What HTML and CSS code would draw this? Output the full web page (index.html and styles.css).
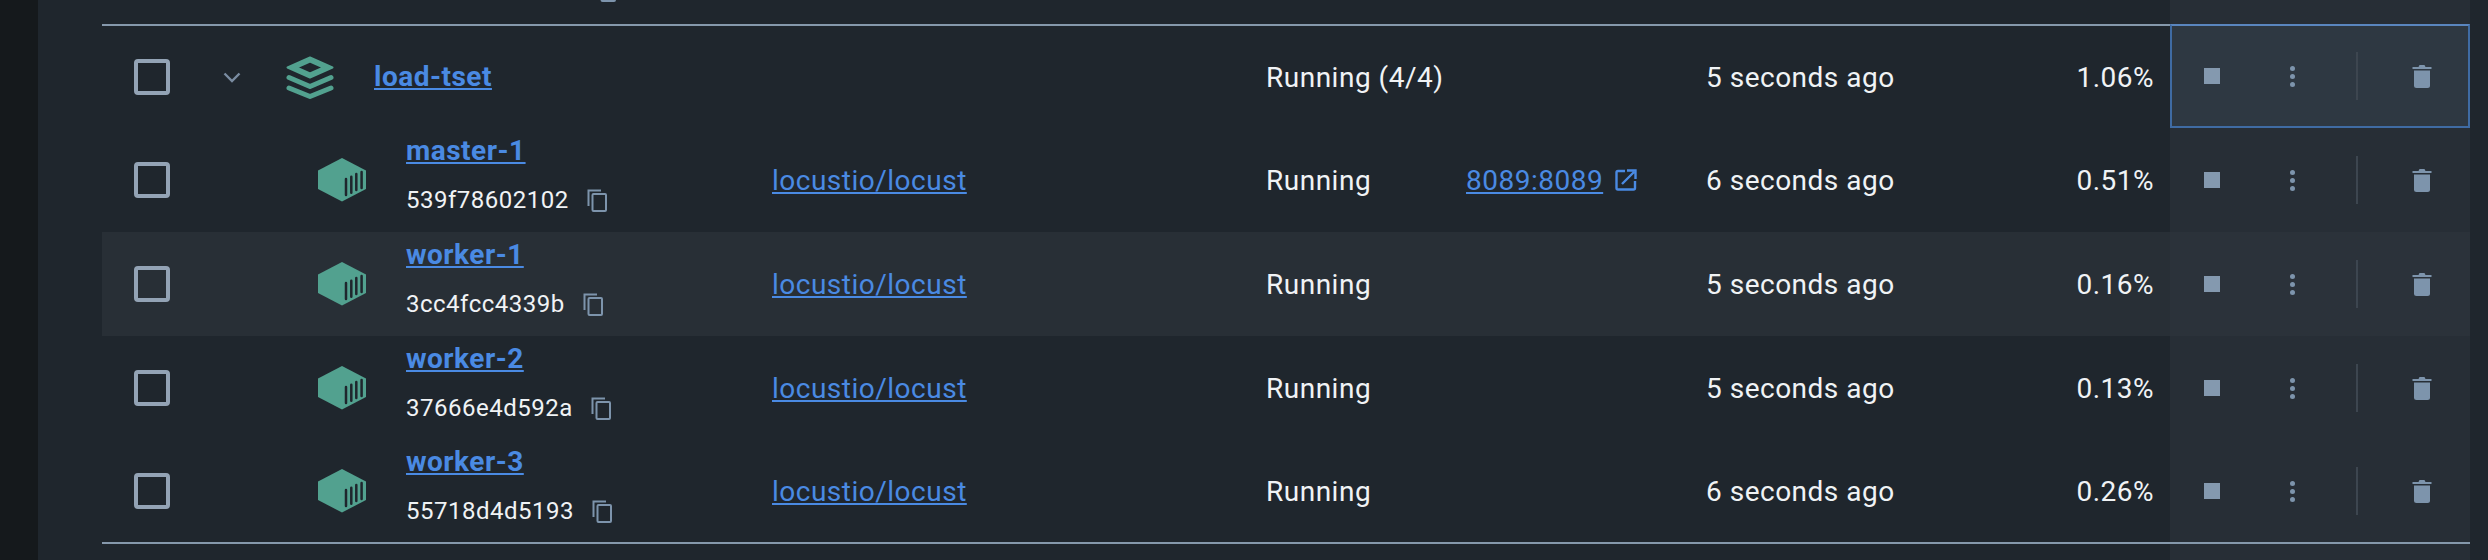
FILE: index.html
```html
<!DOCTYPE html>
<html lang="en">
<head>
    <meta charset="UTF-8">
    <title>Containers</title>
    <link rel="stylesheet" href="styles.css">
</head>
<body>
    <svg class="defs" width="0" height="0">
        <symbol id="i-stack" viewBox="0 0 48 43">
            <path d="M24 1.500 46.500 11.500 24 21.500 1.500 11.500Z M24 5.500 10.500 11.500 24 17.500 37.500 11.500Z" fill="#52a18f" fill-rule="evenodd" stroke="#52a18f" stroke-linejoin="round" stroke-width="2"/>
            <path d="M3 21.500 24 30.500 45 21.500M3 32 24 40.500 45 32" fill="none" stroke="#52a18f" stroke-linecap="round" stroke-linejoin="round" stroke-width="5"/>
        </symbol>
        <symbol id="i-box" viewBox="0 0 48 44">
            <path d="M24 0 48 12.500V31L24 43.500 0 31V12.500Z" fill="#52a18f"/>
            <path d="M28 21V37M33.300 18.700V34.700M38.300 16V32M43.600 14V30" fill="none" stroke="#1f262d" stroke-linecap="round" stroke-width="2.500"/>
        </symbol>
        <symbol id="i-copy" viewBox="0 0 20 23">
            <path d="M1.500 17V1.500H14" fill="none" stroke="#7d94ac" stroke-width="2"/>
            <rect x="5.500" y="5" width="13.500" height="17" rx="1" fill="none" stroke="#7d94ac" stroke-width="2"/>
        </symbol>
        <symbol id="i-open" viewBox="0 0 22 22">
            <path d="M10 2H3Q1.500 2 1.500 3.500V19Q1.500 20.500 3 20.500H18.500Q20 20.500 20 19V12" fill="none" stroke="#4a8ae3" stroke-width="2.400"/>
            <path d="M7 15 19 3M12 1.500H20.500V10" fill="none" stroke="#4a8ae3" stroke-width="2.400"/>
        </symbol>
        <symbol id="i-trash" viewBox="0 0 20 24">
            <path d="M0.500 3H6.500L7.500 1H12.500L13.500 3H19.500V5H0.500Z" fill="#7d94ac"/>
            <path d="M2 6.500H18V21.500Q18 24 15.500 24H4.500Q2 24 2 21.500Z" fill="#7d94ac"/>
        </symbol>
    </svg>

    <div class="sidebar"></div>
    <div class="main">
        <div class="table">
            <div class="strip strip-top">
                <div class="peek">
                    <span class="hash">8f2ab01c77de</span>
                    <svg class="copy"><use href="#i-copy"/></svg>
                </div>
                <div class="action-fill"></div>
            </div>

            <div class="row row-group">
                <div class="cell-check"><span class="checkbox"></span></div>
                <div class="cell-name">
                    <svg class="chevron" viewBox="0 0 18 11"><path d="M1.500 1.500 9 9 16.500 1.500" fill="none" stroke="#7a8ca1" stroke-width="2.400"/></svg>
                    <svg class="icon-stack"><use href="#i-stack"/></svg>
                    <a class="name" href="#">load-tset</a>
                </div>
                <div class="cell-image"></div>
                <div class="cell-status">Running (4/4)</div>
                <div class="cell-port"></div>
                <div class="cell-time">5 seconds ago</div>
                <div class="cell-cpu">1.06%</div>
                <div class="cell-actions selected">
                    <span class="stop"></span>
                    <span class="dots"><i></i><i></i><i></i></span>
                    <span class="divider"></span>
                    <svg class="trash"><use href="#i-trash"/></svg>
                </div>
            </div>

            <div class="row">
                <div class="cell-check"><span class="checkbox"></span></div>
                <div class="cell-name child">
                    <svg class="icon-box"><use href="#i-box"/></svg>
                    <div class="name-stack">
                        <a class="name" href="#">master-1</a>
                        <div class="hash-line"><span class="hash">539f78602102</span><svg class="copy"><use href="#i-copy"/></svg></div>
                    </div>
                </div>
                <div class="cell-image"><a href="#">locustio/locust</a></div>
                <div class="cell-status">Running</div>
                <div class="cell-port"><a href="#">8089:8089</a><svg class="open"><use href="#i-open"/></svg></div>
                <div class="cell-time">6 seconds ago</div>
                <div class="cell-cpu">0.51%</div>
                <div class="cell-actions">
                    <span class="stop"></span>
                    <span class="dots"><i></i><i></i><i></i></span>
                    <span class="divider"></span>
                    <svg class="trash"><use href="#i-trash"/></svg>
                </div>
            </div>

            <div class="row row-hover">
                <div class="cell-check"><span class="checkbox"></span></div>
                <div class="cell-name child">
                    <svg class="icon-box"><use href="#i-box"/></svg>
                    <div class="name-stack">
                        <a class="name" href="#">worker-1</a>
                        <div class="hash-line"><span class="hash">3cc4fcc4339b</span><svg class="copy"><use href="#i-copy"/></svg></div>
                    </div>
                </div>
                <div class="cell-image"><a href="#">locustio/locust</a></div>
                <div class="cell-status">Running</div>
                <div class="cell-port"></div>
                <div class="cell-time">5 seconds ago</div>
                <div class="cell-cpu">0.16%</div>
                <div class="cell-actions">
                    <span class="stop"></span>
                    <span class="dots"><i></i><i></i><i></i></span>
                    <span class="divider"></span>
                    <svg class="trash"><use href="#i-trash"/></svg>
                </div>
            </div>

            <div class="row">
                <div class="cell-check"><span class="checkbox"></span></div>
                <div class="cell-name child">
                    <svg class="icon-box"><use href="#i-box"/></svg>
                    <div class="name-stack">
                        <a class="name" href="#">worker-2</a>
                        <div class="hash-line"><span class="hash">37666e4d592a</span><svg class="copy"><use href="#i-copy"/></svg></div>
                    </div>
                </div>
                <div class="cell-image"><a href="#">locustio/locust</a></div>
                <div class="cell-status">Running</div>
                <div class="cell-port"></div>
                <div class="cell-time">5 seconds ago</div>
                <div class="cell-cpu">0.13%</div>
                <div class="cell-actions">
                    <span class="stop"></span>
                    <span class="dots"><i></i><i></i><i></i></span>
                    <span class="divider"></span>
                    <svg class="trash"><use href="#i-trash"/></svg>
                </div>
            </div>

            <div class="row row-last">
                <div class="cell-check"><span class="checkbox"></span></div>
                <div class="cell-name child">
                    <svg class="icon-box"><use href="#i-box"/></svg>
                    <div class="name-stack">
                        <a class="name" href="#">worker-3</a>
                        <div class="hash-line"><span class="hash">55718d4d5193</span><svg class="copy"><use href="#i-copy"/></svg></div>
                    </div>
                </div>
                <div class="cell-image"><a href="#">locustio/locust</a></div>
                <div class="cell-status">Running</div>
                <div class="cell-port"></div>
                <div class="cell-time">6 seconds ago</div>
                <div class="cell-cpu">0.26%</div>
                <div class="cell-actions">
                    <span class="stop"></span>
                    <span class="dots"><i></i><i></i><i></i></span>
                    <span class="divider"></span>
                    <svg class="trash"><use href="#i-trash"/></svg>
                </div>
            </div>

            <div class="strip strip-bottom">
                <div class="action-fill"></div>
            </div>
        </div>
    </div>
</body>
</html>
```

FILE: styles.css
```css
* {
    box-sizing: border-box;
}

html,
body {
    margin: 0;
    height: 560px;
    overflow: hidden;
}

body {
    display: flex;
    background-color: #1f262d;
    color: #f0f3f5;
    font-family: Roboto, "Liberation Sans", sans-serif;
    font-size: 28px;
    letter-spacing: 0.5px;
}

a {
    color: #4a8ae3;
}

.defs {
    position: absolute;
}

.sidebar {
    flex: 0 0 38px;
    background-color: #15191c;
}

.main {
    flex: 1;
    padding: 0 18px 0 64px;
}

.table {
    display: flex;
    flex-direction: column;
    height: 560px;
}

/* bits above and below the visible rows */
.strip {
    display: flex;
    justify-content: flex-end;
    flex: none;
}

.strip-top {
    height: 24px;
}

.strip-bottom {
    height: 16px;
}

.peek {
    flex: 1;
    display: flex;
    align-items: flex-end;
    height: 2px;
    padding-left: 306px;
    overflow: hidden;
}

.peek .hash {
    flex: none;
    line-height: 24px;
    margin-bottom: -2px;
}

.peek .copy {
    margin-left: 27px;
}

.action-fill {
    flex: 0 0 300px;
    height: 100%;
    background-color: #272e36;
}

/* rows */
.row {
    display: grid;
    grid-template-columns: 104px 566px 494px 200px 240px 301px 163px 300px;
    height: 104px;
    flex: none;
    align-items: center;
}

.row-group {
    border-top: 2px solid #8598ab;
}

.row-last {
    border-bottom: 2px solid #8598ab;
}

.row-hover {
    background-color: #282f36;
}

.cell-check {
    padding-left: 32px;
}

.checkbox {
    display: block;
    width: 36px;
    height: 36px;
    border: 4px solid #93a3b5;
    border-radius: 4px;
}

.cell-name {
    display: flex;
    align-items: center;
    padding-left: 17px;
}

.cell-name.child {
    padding-left: 112px;
}

.chevron {
    width: 18px;
    height: 11px;
    margin-right: 45px;
}

.icon-stack {
    width: 48px;
    height: 43px;
    margin-right: 40px;
}

.icon-box {
    width: 48px;
    height: 44px;
    margin-right: 40px;
}

.name {
    font-weight: 700;
    line-height: 32px;
}

.name-stack {
    display: flex;
    flex-direction: column;
    gap: 17px;
    margin-bottom: 9px;
}

.hash-line {
    display: flex;
    align-items: center;
    height: 32px;
}

.hash {
    font-size: 24px;
}

.copy {
    width: 20px;
    height: 23px;
    margin-left: 18px;
    flex: none;
}

.cell-port {
    display: flex;
    align-items: center;
}

.open {
    width: 22px;
    height: 22px;
    margin-left: 12px;
}

.cell-cpu {
    text-align: right;
    padding-right: 16px;
}

/* action column */
.cell-actions {
    display: flex;
    align-items: center;
    align-self: stretch;
    padding-left: 32px;
    background-color: #272e36;
    border-style: solid;
    border-color: transparent;
    border-width: 0 2px;
}

.row-hover .cell-actions {
    background-color: #2b323a;
}

.cell-actions.selected {
    background-color: #2e3842;
    border-width: 2px;
    border-color: #5a86bf #3f6ba3 #3f6ba3;
    margin-top: -2px;
}

.stop {
    width: 16px;
    height: 16px;
    background-color: #8499af;
}

.dots {
    display: flex;
    flex-direction: column;
    gap: 3px;
    margin-left: 70px;
}

.dots i {
    display: block;
    width: 5px;
    height: 5px;
    border-radius: 50%;
    background-color: #7d94ac;
}

.divider {
    width: 2px;
    height: 48px;
    margin-left: 61px;
    background-color: #3d4650;
}

.trash {
    width: 20px;
    height: 24px;
    margin-left: 54px;
}
```
